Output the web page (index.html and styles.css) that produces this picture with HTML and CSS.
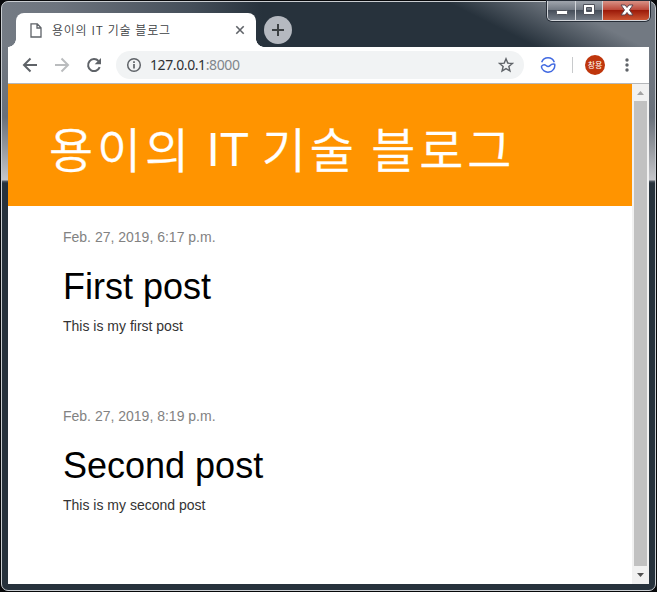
FILE: index.html
```html
<!DOCTYPE html>
<html lang="ko">
<head>
<meta charset="utf-8">
<title>용이의 IT 기술 블로그</title>
<link rel="stylesheet" href="styles.css">
</head>
<body>
<div class="window">
  <div class="controls">
    <span class="control"><svg width="27" height="19" viewBox="0 0 27 19"><rect x="8.500" y="9.500" width="11" height="4" rx="1" fill="#fff" stroke="#50535c"/></svg></span>
    <span class="control"><svg width="26" height="19" viewBox="0 0 26 19"><path d="M7.500 3.500h11v10h-11zM10.500 6.500v4h5v-4z" fill="#fff" fill-rule="evenodd" stroke="#50535c"/></svg></span>
    <span class="control close"><svg width="46" height="19" viewBox="0 0 46 19"><path d="M18 4h4l2 2.500L26 4h4L26.500 9l3.500 5h-4l-2-2.500-2 2.500h-4l3.500-5z" fill="#fff" stroke="#5b4650"/></svg></span>
  </div>
  <div class="tabs">
    <div class="tab">
      <svg class="page-icon" width="12" height="15" viewBox="0 0 12 15"><path d="M1 .8h6.300L11 4.700V14H1zM7 1v4h4" fill="none" stroke="#5f6368" stroke-width="1.300"/></svg>
      <span class="tab-title">용이의 IT 기술 블로그</span>
      <svg class="tab-close" width="10" height="10" viewBox="0 0 10 10"><path d="M1.300 1.300l7.400 7.400M8.700 1.300L1.300 8.700" stroke="#5f6368" stroke-width="1.600"/></svg>
    </div>
    <div class="new-tab"><svg width="28" height="28" viewBox="0 0 28 28"><path d="M8 14h12M14 8v12" stroke="#3c4043" stroke-width="2"/></svg></div>
  </div>
  <div class="toolbar">
    <svg class="nav" width="16" height="16" viewBox="0 0 16 16"><path d="M15 8H2.500M8.500 1.500L2 8l6.500 6.500" fill="none" stroke="#5f6368" stroke-width="2"/></svg>
    <svg class="nav" width="16" height="16" viewBox="0 0 16 16"><path d="M1 8h12.500M7.500 1.500L14 8l-6.500 6.500" fill="none" stroke="#babcbe" stroke-width="2"/></svg>
    <svg class="nav" width="16" height="16" viewBox="0 0 16 16"><path d="M13.700 10.200A6 6 0 1 1 12.500 4" fill="none" stroke="#5f6368" stroke-width="2"/><path d="M15 1v6.300H8.700z" fill="#5f6368"/></svg>
    <div class="address">
      <svg width="16" height="16" viewBox="0 0 16 16"><circle cx="8" cy="8" r="6.300" fill="none" stroke="#5f6368" stroke-width="1.500"/><path d="M8 7v4.500M8 4.300v1.600" stroke="#5f6368" stroke-width="1.700"/></svg>
      <span class="url">127.0.0.1<span class="port">:8000</span></span>
      <svg width="16" height="16" viewBox="0 0 16 16"><path d="M8 1.800l1.750 4.300 4.650.35-3.550 3 1.100 4.550L8 11.550 4.050 14l1.100-4.550-3.550-3 4.650-.35z" fill="none" stroke="#5f6368" stroke-width="1.400"/></svg>
    </div>
    <svg class="extension" width="16" height="16" viewBox="0 0 16 16"><path d="M1.700 5.200A6.700 6.700 0 0 1 14.300 5.200M1.300 9.500c1.600-1.800 3.200-2.300 4.700-1s2.800 1.300 4 .1 2.700-2 4.700-1.300A6.700 6.700 0 0 1 1.300 9.500" fill="none" stroke="#4169e1" stroke-width="1.500"/></svg>
    <span class="divider"></span>
    <span class="avatar">창용</span>
    <svg class="menu" width="4" height="14" viewBox="0 0 4 14"><g fill="#5f6368"><circle cx="2" cy="2" r="1.700"/><circle cx="2" cy="7" r="1.700"/><circle cx="2" cy="12" r="1.700"/></g></svg>
  </div>
  <div class="viewport">
    <main class="page">
      <header class="page-header"><h1>용이의<span class="latin"> IT </span>기술<span class="latin"> </span>블로그</h1></header>
      <article class="post">
        <p class="date">Feb. 27, 2019, 6:17 p.m.</p>
        <h2>First post</h2>
        <p class="text">This is my first post</p>
      </article>
      <article class="post">
        <p class="date">Feb. 27, 2019, 8:19 p.m.</p>
        <h2>Second post</h2>
        <p class="text">This is my second post</p>
      </article>
    </main>
    <div class="scrollbar">
      <svg width="17" height="17" viewBox="0 0 17 17"><path d="M5 11l3.500-4L12 11z" fill="#a3a3a3"/></svg>
      <span class="thumb"></span>
      <svg width="17" height="18" viewBox="0 0 17 18"><path d="M5 7l3.500 4L12 7z" fill="#505050"/></svg>
    </div>
  </div>
</div>
</body>
</html>
```
FILE: styles.css
```css
* { box-sizing: border-box; }
body { margin: 0; background: #08090b; overflow: hidden; font-family: "Liberation Sans", "Noto Sans CJK KR", sans-serif; }
.window {
  position: relative;
  width: 655px;
  height: 590px;
  margin: 1px;
  padding: 11px 6px 6px;
  border: 1px solid #c9cdd1;
  border-radius: 7px;
  background:
    linear-gradient(#727982, #69707a 70px, #93979d 100px, #c5c6ca 133px, #59616b 134px, #27323c 136px) left 0 top 45px / 7px 100% no-repeat,
    linear-gradient(#727982, #69707a 70px, #93979d 100px, #c5c6ca 133px, #59616b 134px, #27323c 136px) right 0 top 45px / 7px 100% no-repeat,
    linear-gradient(26.6deg, rgba(114,121,130,0) 48%, #727982 75%) right top / 300px 50px no-repeat,
    linear-gradient(90deg, #747b84 0, #6d747e 55px, #444e59 190px, #27323c 260px, #27323c) top / 100% 50px no-repeat,
    #27323c;
}
.controls { position: absolute; top: -1px; right: 5px; display: flex; height: 20px; border: 1px solid #d2d5da; border-top: 0; border-radius: 0 0 5px 5px; box-shadow: 0 0 0 1px #262d37; overflow: hidden; }
.control { display: flex; background: linear-gradient(#a0a5ad, #737a84 45%, #464e5a 50%, #737b86); border-right: 1px solid #d2d5da; }
.close { background: linear-gradient(#d99286, #bd4b3c 45%, #9c1b0a 50%, #cc5432); border-right: 0; }
.tabs { display: flex; height: 34px; padding-left: 8px; }
.tab { position: relative; display: flex; align-items: center; width: 240px; height: 34px; padding: 0 11px 0 14px; border-radius: 8px 8px 0 0; background: #fff; }
.tab::before, .tab::after { content: ""; position: absolute; bottom: 0; width: 8px; height: 8px; }
.tab::before { left: -8px; background: radial-gradient(circle at 0 0, transparent 7.5px, #fff 8px); }
.tab::after { right: -8px; background: radial-gradient(circle at 100% 0, transparent 7.5px, #fff 8px); }
.tab-title { flex: 1; margin-left: 10px; font: 350 12px/18px "Noto Sans CJK KR DemiLight", "Noto Sans CJK KR", sans-serif; letter-spacing: .75px; color: #3c4043; white-space: nowrap; }
.new-tab { width: 28px; height: 28px; margin: 3px 0 0 8px; border-radius: 50%; background: #b5b9c0; }
.toolbar { display: flex; align-items: center; height: 37px; padding-left: 14px; background: #fff; border-bottom: 1px solid #b5b7ba; }
.nav { margin-right: 16px; }
.address { display: flex; align-items: center; width: 408px; height: 28px; margin-left: -2px; padding: 0 10px; border-radius: 14px; background: #f1f3f4; }
.url { flex: 1; margin-left: 8px; font: 14px/20px "Noto Sans", sans-serif; letter-spacing: -.4px; color: #303134; }
.port { color: #80868b; }
.extension { margin-left: 16px; }
.divider { width: 1px; height: 16px; margin-left: 16px; background: #c8cacc; }
.avatar { width: 20px; height: 20px; margin-left: 12px; border-radius: 50%; background: #bf360c; color: #fff; font: 8px/19px "Noto Sans CJK KR", sans-serif; text-align: center; }
.menu { margin-left: 20px; }
.viewport { display: flex; height: 500px; background: #fff; }
.page { width: 624px; }
.page-header { height: 122px; padding: 28px 40px 28px 41px; background: #ff9400; }
h1, h2, p { margin: 0; font-weight: 400; }
h1 { font-family: "Noto Sans CJK KR DemiLight", "Noto Sans CJK KR", sans-serif; font-size: 48px; line-height: 70px; font-weight: 350; letter-spacing: 3.900px; color: #fff; white-space: nowrap; -webkit-text-stroke: .3px #fff; }
.latin { font-family: "Liberation Sans", sans-serif; font-size: 48px; line-height: 0; vertical-align: 2px; font-weight: 400; letter-spacing: 0; -webkit-text-stroke: 0; }
.post { height: 179px; padding: 21px 0 0 55px; }
.date { font-size: 14px; line-height: 20px; color: #828282; }
h2 { margin-top: 20px; font-size: 36px; line-height: 40px; color: #000; }
.text { margin-top: 9px; font-size: 14px; line-height: 20px; color: #333; }
.scrollbar { display: flex; flex-direction: column; width: 17px; background: #f1f1f1; }
.thumb { width: 13px; height: 465px; margin-left: 2px; background: #c1c1c1; }
```
